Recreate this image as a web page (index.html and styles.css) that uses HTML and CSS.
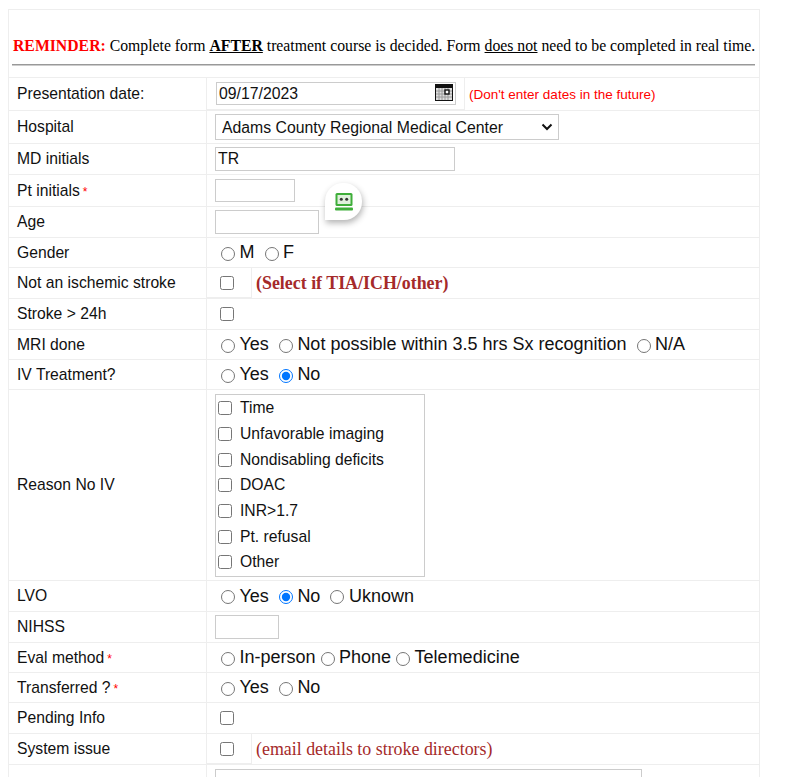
FILE: index.html
```html
<!DOCTYPE html>
<html lang="en">
<head>
<meta charset="utf-8">
<title>Stroke form</title>
<link rel="stylesheet" href="styles.css">
</head>
<body>
<main class="sheet">
  <p class="reminder"><b class="alert">REMINDER:</b> Complete form <b><u>AFTER</u></b> treatment course is decided. Form <u>does not</u> need to be completed in real time.</p>
  <hr class="rule">
  <table class="form">
    <tr class="h33"><th>Presentation date:</th><td class="flush">
      <div class="split">
        <div class="boxed date-box"><div class="date-wrap"><input class="field date" type="text" value="09/17/2023">
          <svg class="cal" viewBox="0 0 18 17" width="18" height="17"><rect width="18" height="17" fill="#111"/><rect x="1" y="4" width="16" height="12" fill="#ddd"/><path d="M1 7h16M1 10h16M1 13h16M4 4v12M7 4v12M10 4v12M13 4v12" stroke="#9a9a9a" stroke-width="1"/><rect x="10" y="6" width="4" height="4" fill="#fff" stroke="#111" stroke-width="1.4"/></svg></div></div>
        <span class="hint">(Don't enter dates in the future)</span>
      </div></td></tr>
    <tr class="h33"><th>Hospital</th><td><div class="select-wrap"><select class="field hospital"><option>Adams County Regional Medical Center</option></select><svg class="chev" viewBox="0 0 12 8" width="12" height="8"><path d="M1.5 1.5 6 6l4.5-4.5" fill="none" stroke="#111" stroke-width="2"/></svg></div></td></tr>
    <tr class="h31"><th>MD initials</th><td><input class="field md" type="text" value="TR"></td></tr>
    <tr class="h32"><th>Pt initials<span class="req">*</span></th><td><input class="field pt" type="text"></td></tr>
    <tr class="h31"><th>Age</th><td><input class="field age" type="text"></td></tr>
    <tr class="h30"><th>Gender</th><td><div class="opts"><label><input type="radio" name="g">M</label><label><input type="radio" name="g">F</label></div></td></tr>
    <tr class="h31"><th>Not an ischemic stroke</th><td class="flush"><div class="split"><div class="boxed check-box"><input type="checkbox"></div><b class="note">(Select if TIA/ICH/other)</b></div></td></tr>
    <tr class="h31"><th>Stroke &gt; 24h</th><td><input class="solo" type="checkbox"></td></tr>
    <tr class="h30"><th>MRI done</th><td><div class="opts"><label><input type="radio" name="m">Yes</label><label><input type="radio" name="m">Not possible within 3.5 hrs Sx recognition</label><label><input type="radio" name="m">N/A</label></div></td></tr>
    <tr class="h30"><th>IV Treatment?</th><td><div class="opts"><label><input type="radio" name="iv">Yes</label><label><input type="radio" name="iv" checked>No</label></div></td></tr>
    <tr class="h191"><th>Reason No IV</th><td>
      <div class="reasons">
        <label><input type="checkbox">Time</label>
        <label><input type="checkbox">Unfavorable imaging</label>
        <label><input type="checkbox">Nondisabling deficits</label>
        <label><input type="checkbox">DOAC</label>
        <label><input type="checkbox">INR&gt;1.7</label>
        <label><input type="checkbox">Pt. refusal</label>
        <label><input type="checkbox">Other</label>
      </div></td></tr>
    <tr class="h31"><th>LVO</th><td><div class="opts"><label><input type="radio" name="l">Yes</label><label><input type="radio" name="l" checked>No</label><label><input type="radio" name="l">Uknown</label></div></td></tr>
    <tr class="h31"><th>NIHSS</th><td><input class="field nihss" type="text"></td></tr>
    <tr class="h30"><th>Eval method<span class="req">*</span></th><td><div class="opts tight"><label><input type="radio" name="e">In-person</label><label><input type="radio" name="e">Phone</label><label><input type="radio" name="e">Telemedicine</label></div></td></tr>
    <tr class="h30"><th>Transferred ?<span class="req">*</span></th><td><div class="opts"><label><input type="radio" name="t">Yes</label><label><input type="radio" name="t">No</label></div></td></tr>
    <tr class="h31"><th>Pending Info</th><td><input class="solo" type="checkbox"></td></tr>
    <tr class="h31"><th>System issue</th><td class="flush"><div class="split"><div class="boxed check-box"><input type="checkbox"></div><span class="note">(email details to stroke directors)</span></div></td></tr>
    <tr class="h60"><th></th><td><textarea class="field notes"></textarea></td></tr>
  </table>
  <div class="bubble"><svg viewBox="0 0 20 20" width="20" height="20"><rect x="1.5" y="1" width="17" height="13" rx="1.5" fill="#3fae3a"/><rect x="3.5" y="3" width="13" height="9" fill="#dff0dc"/><circle cx="7.3" cy="7.3" r="1.5" fill="#333"/><circle cx="12.7" cy="7.3" r="1.5" fill="#333"/><rect x="1" y="15.5" width="18" height="3" rx="1" fill="#3fae3a"/></svg></div>
</main>
</body>
</html>
```

FILE: styles.css
```css
html, body { margin: 0; padding: 0; background: #fff; }
body { height: 777px; overflow: hidden; font-family: "Liberation Sans", Arial, sans-serif; color: #111; }

.sheet {
  position: relative;
  box-sizing: border-box;
  width: 752px;
  height: 768px;
  margin: 9px 0 0 8px;
  border: 1px solid #eee;
  border-bottom: 0;
  overflow: hidden;
}
.reminder {
  margin: 27px 0 0 4px;
  font: 15.76px/18px "Liberation Serif", "Times New Roman", serif;
  color: #000;
  white-space: nowrap;
}
.alert { color: #f00; }
.rule { margin: 9px 4px 0 3px; border: 0; border-top: 1px solid #999; border-bottom: 1px solid #ccc; height: 0; }

.form { margin-top: 11px; width: 750px; border-collapse: collapse; table-layout: fixed; }
.form th, .form td { border-top: 1px solid #eee; padding: 0 8px; vertical-align: middle; }
.form th { width: 181px; font-weight: 400; font-size: 15.7px; text-align: left; border-right: 1px solid #eee; }
.form td { padding-left: 8px; }
.form td.flush { padding: 0; }
.h30 > * { height: 29px; }
.h31 > * { height: 30px; }
.h32 > * { height: 31px; }
.h33 > * { height: 32px; }
.h60 > * { height: 60px; }
.h191 > * { height: 190px; }
.h60 td { vertical-align: top; padding-top: 4px; }

.field {
  box-sizing: border-box;
  display: block;
  margin: 0;
  border: 1px solid #ccc;
  border-radius: 0;
  background: #fff;
  padding: 0 2px;
  font: 15.8px "Liberation Sans", Arial, sans-serif;
  color: #111;
  outline: 0;
}
.date { width: 240px; height: 23px; }
.select-wrap { position: relative; width: 344px; }
.hospital { width: 344px; height: 26px; padding-left: 6px; appearance: none; }
.chev { position: absolute; right: 6px; top: 9px; pointer-events: none; }
.md { width: 240px; height: 24px; }
.pt { width: 80px; height: 23px; }
.age { width: 104px; height: 24px; }
.nihss { width: 64px; height: 24px; }
.notes { width: 427px; height: 50px; resize: none; }

.split { display: flex; align-items: stretch; height: 100%; }
.boxed { box-sizing: border-box; display: flex; align-items: center; border: 1px solid #eee; border-width: 0 1px 1px 0; }
.date-box { padding: 0 8px 0 9px; width: 258px; height: 32px; }
.date-wrap { position: relative; }
.cal { position: absolute; left: 219px; top: 2px; }
.hint { align-self: center; margin: 1px 0 0 4px; font-size: 13.5px; color: #f00; }
.check-box { width: 45px; height: 30px; padding-left: 13px; }
.check-box input { width: 14px; height: 14px; margin: 0; }
.note { align-self: center; margin-left: 4px; font: 17.9px "Liberation Serif", "Times New Roman", serif; color: #a52a2a; }
b.note { font-weight: 700; }
.solo { display: block; width: 14px; height: 14px; margin: 0 0 0 5px; }

.opts { display: flex; gap: 10px; padding-left: 6px; font-size: 18px; }
.opts.tight { gap: 5px; }
.opts label { display: flex; align-items: center; white-space: nowrap; }
.opts input { width: 14px; height: 14px; margin: 2px 4.5px 0 0; flex: none; }

.reasons { box-sizing: border-box; width: 210px; height: 183px; border: 1px solid #ccc; padding: 1px 2px 0; font-size: 15.7px; }
.reasons label { display: flex; align-items: center; height: 25.7px; white-space: nowrap; }
.reasons input { width: 14px; height: 14px; margin: 0 8px 0 0; flex: none; }

.req { margin-left: 3px; color: #f00; font-size: 12px; }

.bubble {
  position: absolute;
  left: 316px;
  top: 173px;
  display: flex;
  align-items: center;
  justify-content: center;
  width: 37px;
  height: 37px;
  background: #fff;
  border-radius: 18px 18px 18px 0;
  box-shadow: 1px 3px 6px rgba(0,0,0,.3);
}
```
